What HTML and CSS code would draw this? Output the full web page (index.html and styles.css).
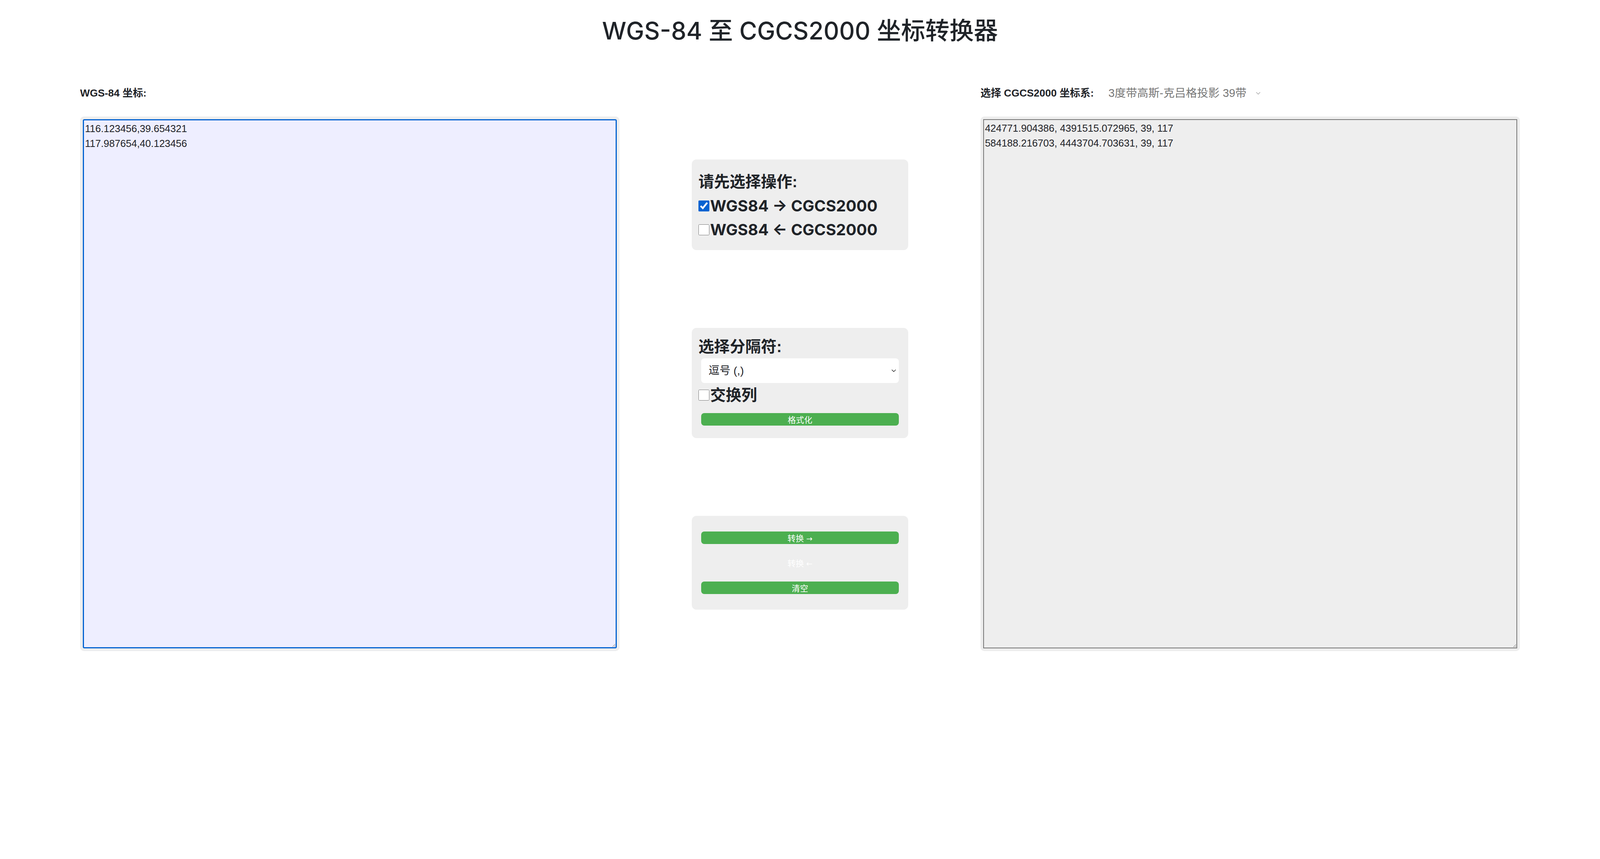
FILE: index.html
```html
<!DOCTYPE html>
<html lang="zh-CN">
  <head>
    <meta charset="UTF-8" />
    <meta name="viewport" content="width=device-width, initial-scale=1.0" />
    <title>WGS-84 至 CGCS2000 坐标转换器</title>
    <link rel="stylesheet" href="styles.css">
  </head>
  <body>
    <h1>WGS-84 至 CGCS2000 坐标转换器</h1>
    <div id="converter">
      <label class="field-label left" for="wgs84">WGS-84 坐标:</label>
      <div class="field-label right">
        <label for="zone">选择 CGCS2000 坐标系:</label>
        <select id="zone">
          <option>3度带高斯-克吕格投影 39带</option>
        </select>
        <svg class="zone-arrow" width="12" height="7" viewBox="0 0 12 7">
          <path d="M1 1 L6 6 L11 1" fill="none" stroke="#a0a0a0" stroke-width="1.3" />
        </svg>
      </div>

      <div class="box left">
        <textarea id="wgs84" class="input-area">116.123456,39.654321
117.987654,40.123456</textarea>
      </div>

      <div class="controls">
        <div class="panel panel-mode">
          <div class="panel-title">请先选择操作:</div>
          <label class="option first"><input type="checkbox" checked />WGS84 → CGCS2000</label>
          <label class="option"><input type="checkbox" />WGS84 ← CGCS2000</label>
        </div>

        <div class="panel panel-format">
          <div class="panel-title">选择分隔符:</div>
          <div class="select-wrap">
            <select id="separator">
              <option>逗号 (,)</option>
              <option>空格 ( )</option>
              <option>制表符 (Tab)</option>
            </select>
            <svg class="select-arrow" width="12" height="7" viewBox="0 0 12 7">
              <path d="M1 1 L6 6 L11 1" fill="none" stroke="#222" stroke-width="1.4" />
            </svg>
          </div>
          <label class="option swap"><input type="checkbox" />交换列</label>
          <button class="btn format-btn">格式化</button>
        </div>

        <div class="panel panel-actions">
          <button class="btn">转换 <span class="arrow">→</span></button>
          <button class="btn" disabled>转换 <span class="arrow">←</span></button>
          <button class="btn">清空</button>
        </div>
      </div>

      <div class="box right">
        <textarea id="cgcs" class="output-area" readonly>424771.904386, 4391515.072965, 39, 117
584188.216703, 4443704.703631, 39, 117</textarea>
      </div>
    </div>
  </body>
</html>
```

FILE: styles.css
```css
body {
  margin: 0;
  font-family: "Liberation Sans", "Noto Sans CJK SC", sans-serif;
  color: #1f2328;
  background: #fff;
}
h1 {
  margin: 41px 0 0;
  font-family: Inter, "Noto Sans CJK SC", sans-serif;
  font-size: 62px;
  line-height: 75px;
  font-weight: 500;
  text-align: center;
}
#converter {
  display: grid;
  grid-template-columns: 1381px 554px 1381px;
  grid-template-rows: 32px 1368px;
  column-gap: 185px;
  row-gap: 44px;
  justify-content: center;
  margin-top: 106px;
}
.left {
  grid-column: 1;
}
.right {
  grid-column: 3;
}
.field-label {
  grid-row: 1;
  display: flex;
  align-items: center;
  font-size: 26.4px;
  line-height: 32px;
  font-weight: bold;
}
#zone {
  appearance: none;
  border: none;
  background: transparent;
  margin: 0 0 0 37px;
  padding: 0;
  font-family: inherit;
  font-size: 28.8px;
  line-height: 32px;
  color: #777;
}
.zone-arrow {
  margin-left: 24px;
}

/* 左右文本框 */
.box {
  grid-row: 2;
  background: #eee;
  border-radius: 10px;
  padding: 7px;
  box-sizing: border-box;
}
.box textarea {
  display: block;
  width: 100%;
  height: 100%;
  box-sizing: border-box;
  margin: 0;
  padding: 1.6px 2.4px;
  font-family: "Liberation Sans", "Noto Sans CJK SC", sans-serif;
  font-size: 25.6px;
  line-height: 38.4px;
  color: #1f2328;
  outline: none;
}
.input-area {
  background: #eeeeff;
  border: 3.2px solid #0463d1;
  border-radius: 4px;
}
.output-area {
  background: #eee;
  border: 2.4px solid #767676;
  border-radius: 0;
}

/* 中间操作区 */
.controls {
  grid-column: 2;
  grid-row: 2;
  display: flex;
  flex-direction: column;
  justify-content: space-between;
  padding: 110px 0 106px;
}
.panel {
  background: #eee;
  border-radius: 12px;
  padding: 0 17px;
  font-size: 40px;
  font-weight: bold;
}
.panel-title {
  line-height: 48px;
}
.option {
  display: block;
  font-family: Inter, "Noto Sans CJK SC", sans-serif;
  line-height: 48px;
}
.option input {
  width: 28px;
  height: 28px;
  margin: 0 2px 0 0;
  vertical-align: baseline;
  accent-color: #0463d1;
}
.panel-mode {
  padding-top: 33px;
  padding-bottom: 28px;
}
.panel-mode .option {
  margin-top: 13px;
}
.panel-mode .option.first {
  margin-top: 14px;
}
.panel-format {
  padding-top: 24px;
  padding-bottom: 32px;
}
.select-wrap {
  position: relative;
  margin: 6px 0 0 7px;
  width: calc(100% - 14px);
}
#separator {
  appearance: none;
  display: block;
  width: 100%;
  height: 63px;
  border: none;
  border-radius: 8px;
  background: #fff;
  padding: 0 19px;
  font-family: "Liberation Sans", "Noto Sans CJK SC", sans-serif;
  font-size: 28px;
  color: #1f2328;
}
.select-arrow {
  position: absolute;
  right: 7px;
  top: 28px;
}
.swap {
  margin-top: 7px;
}
.btn {
  display: block;
  width: calc(100% - 14px);
  height: 32px;
  margin-left: 7px;
  padding: 0;
  border: none;
  border-radius: 8px;
  background: #4caf50;
  color: #fff;
  font-family: "Liberation Sans", "Noto Sans CJK SC", sans-serif;
  font-size: 21px;
}
.btn .arrow {
  font-family: "DejaVu Sans", sans-serif;
  font-size: 19px;
}
.btn:disabled {
  background: transparent;
}
.format-btn {
  margin-top: 22px;
}
.panel-actions {
  padding-top: 40px;
  padding-bottom: 40px;
}
.panel-actions .btn + .btn {
  margin-top: 32px;
}
```
